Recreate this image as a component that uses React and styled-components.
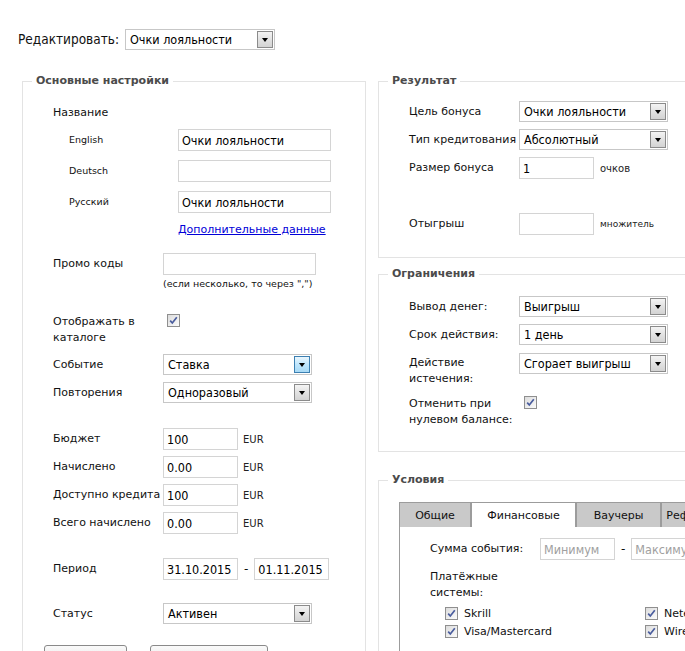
import React from 'react';
import styled, { createGlobalStyle } from 'styled-components';

const GlobalStyle = createGlobalStyle`
  html, body {
    margin: 0;
    overflow: hidden;
    background: #fff;
  }
  body {
    font-family: "DejaVu Sans", Verdana, sans-serif;
    color: #111;
  }
`;

const Page = styled.div`
  width: 720px;
  padding: 29px 0 0 18px;
`;

const TopBar = styled.div`
  display: flex;
  align-items: center;
  gap: 6px;
  height: 21px;
  font: 13.5px/21px "DejaVu Sans Condensed", Tahoma, sans-serif;
`;

const Columns = styled.div`
  display: flex;
  align-items: flex-start;
  gap: 12px;
  margin: 24px 0 0 4px;
`;

const RightCol = styled.div`
  display: flex;
  flex-direction: column;
  width: 330px;
`;

const Box = styled.fieldset`
  margin: ${(p) => p.$mt || 0}px 0 0;
  padding: 0;
  border: 1px solid #e3e3e3;
  width: ${(p) => p.$w}px;
  min-width: 0;
  box-sizing: border-box;
`;

const Legend = styled.legend`
  margin-left: 9px;
  padding: 0 4px;
  font: bold 11px/14px "DejaVu Sans", Verdana, sans-serif;
  color: #4b4b4b;
`;

const Body = styled.div`
  padding: 0 0 ${(p) => p.$pb || 0}px ${(p) => (p.$pl == null ? 30 : p.$pl)}px;
`;

const Row = styled.div`
  display: flex;
  align-items: ${(p) => (p.$top ? 'flex-start' : 'center')};
  margin-top: ${(p) => p.$mt || 0}px;
  padding-left: ${(p) => p.$indent || 0}px;
`;

const Label = styled.div`
  flex: none;
  width: ${(p) => p.$w || 110}px;
  font-size: ${(p) => p.$size || 11}px;
  line-height: 16px;
  white-space: nowrap;
  padding-top: ${(p) => p.$pt || 0}px;
`;

const Title = styled.div`
  font-size: 11px;
  line-height: 16px;
`;

const TextInput = styled.input`
  box-sizing: border-box;
  width: ${(p) => p.$w || 75}px;
  height: 22px;
  margin: 0;
  padding: 0 3px;
  border: 1px solid #d4d4d4;
  font: 12.5px "DejaVu Sans Condensed", Tahoma, sans-serif;
  color: #000;
  outline: none;

  &::placeholder {
    color: #a0a0a0;
  }
`;

const Unit = styled.span`
  margin-left: ${(p) => p.$gap || 5}px;
  font-size: ${(p) => p.$size || 10}px;
  color: #222;
`;

const Dash = styled.span`
  margin: 0 6px;
  font-size: 12px;
`;

const SelectBox = styled.div`
  box-sizing: border-box;
  display: flex;
  align-items: center;
  width: ${(p) => p.$w || 150}px;
  height: 21px;
  border: 1px solid #c7c7c7;
  background: #fff;
  padding: 1px;
  font: 12.5px "DejaVu Sans Condensed", Tahoma, sans-serif;
  color: #000;
`;

const SelectText = styled.span`
  flex: 1;
  padding-left: 3px;
  white-space: nowrap;
  overflow: hidden;
`;

const ArrowBtn = styled.span`
  box-sizing: border-box;
  flex: none;
  display: flex;
  align-items: center;
  justify-content: center;
  width: 16px;
  height: 17px;
  border: 1px solid ${(p) => (p.$hover ? '#3c7fb1' : '#8b8b8b')};
  background: ${(p) =>
    p.$hover
      ? 'linear-gradient(#eaf6fd, #bee6fd 50%, #a7d9f5)'
      : 'linear-gradient(#f4f4f4, #e2e2e2 50%, #d3d3d3)'};

  &::after {
    content: '';
    border-left: 3.5px solid transparent;
    border-right: 3.5px solid transparent;
    border-top: 4px solid #000;
  }
`;

const Select = ({ value, w, hover }) => (
  <SelectBox $w={w}>
    <SelectText>{value}</SelectText>
    <ArrowBtn $hover={hover} />
  </SelectBox>
);

const CheckBox = styled.span`
  box-sizing: border-box;
  flex: none;
  display: inline-flex;
  width: 13px;
  height: 13px;
  margin-left: ${(p) => p.$ml || 0}px;
  border: 1px solid #8f8f8f;
  background: linear-gradient(135deg, #dcdcdc, #fbfbfb);
`;

const Check = ({ ml }) => (
  <CheckBox $ml={ml}>
    <svg width="11" height="11" viewBox="0 0 11 11">
      <path d="M2.2 5.6 L4.3 8 L8.8 2.2" fill="none" stroke="#4a5d9e" strokeWidth="1.7" />
    </svg>
  </CheckBox>
);

const Hint = styled.div`
  font-size: 9.5px;
  line-height: 13px;
  padding-left: 110px;
  margin-top: 2px;
  white-space: nowrap;
`;

const MoreLink = styled.a`
  font-size: 11px;
  line-height: 16px;
  color: #0000d8;
  text-decoration: underline;
  cursor: pointer;
`;

const ButtonRow = styled.div`
  display: flex;
  gap: 23px;
  margin: 21px 0 0 -9px;
  padding-bottom: 20px;
`;

const Button = styled.button`
  width: ${(p) => p.$w}px;
  height: 24px;
  border: 1px solid #8a8a8a;
  border-radius: 3px;
  background: linear-gradient(#fafafa, #e3e3e3);
`;

const TabWidget = styled.div`
  margin: 15px 0 0 20px;
  width: 400px;
  border: 1px solid #9c9c9c;
  border-bottom: none;
`;

const TabBar = styled.div`
  display: flex;
`;

const Tab = styled.div`
  box-sizing: border-box;
  flex: none;
  width: ${(p) => p.$w}px;
  height: 24px;
  display: flex;
  align-items: center;
  justify-content: center;
  font-size: 11px;
  background: ${(p) => (p.$active ? '#fff' : '#c9c9c9')};
  border-right: 2px solid #9c9c9c;
  white-space: nowrap;
  overflow: hidden;
`;

const Panel = styled.div`
  padding: 0 0 30px 30px;
`;

const PayGrid = styled.div`
  display: grid;
  grid-template-columns: 200px 200px;
  margin: 6px 0 0 15px;
  row-gap: 5px;
`;

const PayItem = styled.div`
  display: flex;
  align-items: center;
  gap: 6px;
  font-size: 11px;
  line-height: 13px;
  white-space: nowrap;
`;

export default function App() {
  return (
    <Page>
      <GlobalStyle />
      <TopBar>
        <span>Редактировать:</span>
        <Select value="Очки лояльности" w={150} />
      </TopBar>

      <Columns>
        <Box $w={344}>
          <Legend>Основные настройки</Legend>
          <Body>
            <Row $mt={17}>
              <Title>Название</Title>
            </Row>
            <Row $mt={8} $indent={16}>
              <Label $w={109} $size={9.5}>English</Label>
              <TextInput $w={153} defaultValue="Очки лояльности" />
            </Row>
            <Row $mt={9} $indent={16}>
              <Label $w={109} $size={9.5}>Deutsch</Label>
              <TextInput $w={153} defaultValue="" />
            </Row>
            <Row $mt={9} $indent={16}>
              <Label $w={109} $size={9.5}>Русский</Label>
              <TextInput $w={153} defaultValue="Очки лояльности" />
            </Row>
            <Row $mt={9} $indent={125}>
              <MoreLink>Дополнительные данные</MoreLink>
            </Row>
            <Row $mt={15}>
              <Label>Промо коды</Label>
              <TextInput $w={153} defaultValue="" />
            </Row>
            <Hint>(если несколько, то через ",")</Hint>
            <Row $mt={24} $top>
              <Label>Отображать в<br />каталоге</Label>
              <Check ml={4} />
            </Row>
            <Row $mt={8}>
              <Label>Событие</Label>
              <Select value="Ставка" w={149} hover />
            </Row>
            <Row $mt={7}>
              <Label>Повторения</Label>
              <Select value="Одноразовый" w={149} />
            </Row>
            <Row $mt={25}>
              <Label>Бюджет</Label>
              <TextInput defaultValue="100" />
              <Unit>EUR</Unit>
            </Row>
            <Row $mt={6}>
              <Label>Начислено</Label>
              <TextInput defaultValue="0.00" />
              <Unit>EUR</Unit>
            </Row>
            <Row $mt={6}>
              <Label>Доступно кредита</Label>
              <TextInput defaultValue="100" />
              <Unit>EUR</Unit>
            </Row>
            <Row $mt={6}>
              <Label>Всего начислено</Label>
              <TextInput defaultValue="0.00" />
              <Unit>EUR</Unit>
            </Row>
            <Row $mt={24}>
              <Label>Период</Label>
              <TextInput defaultValue="31.10.2015" />
              <Dash>-</Dash>
              <TextInput defaultValue="01.11.2015" />
            </Row>
            <Row $mt={23}>
              <Label>Статус</Label>
              <Select value="Активен" w={149} />
            </Row>
            <ButtonRow>
              <Button $w={83} aria-label="Сохранить" />
              <Button $w={118} aria-label="Отмена" />
            </ButtonRow>
          </Body>
        </Box>

        <RightCol>
          <Box $w={330}>
            <Legend>Результат</Legend>
            <Body $pb={22}>
              <Row $mt={13}>
                <Label>Цель бонуса</Label>
                <Select value="Очки лояльности" w={149} />
              </Row>
              <Row $mt={7}>
                <Label>Тип кредитования</Label>
                <Select value="Абсолютный" w={149} />
              </Row>
              <Row $mt={7}>
                <Label>Размер бонуса</Label>
                <TextInput defaultValue="1" />
                <Unit $gap={6}>очков</Unit>
              </Row>
              <Row $mt={34}>
                <Label>Отыгрыш</Label>
                <TextInput defaultValue="" />
                <Unit $gap={6} $size={9}>множитель</Unit>
              </Row>
            </Body>
          </Box>

          <Box $w={330} $mt={9}>
            <Legend>Ограничения</Legend>
            <Body $pb={23}>
              <Row $mt={15}>
                <Label>Вывод денег:</Label>
                <Select value="Выигрыш" w={149} />
              </Row>
              <Row $mt={7}>
                <Label>Срок действия:</Label>
                <Select value="1 день" w={149} />
              </Row>
              <Row $mt={8} $top>
                <Label $pt={2}>Действие<br />истечения:</Label>
                <Select value="Сгорает выигрыш" w={149} />
              </Row>
              <Row $mt={9} $top>
                <Label>Отменить при<br />нулевом балансе:</Label>
                <Check ml={5} />
              </Row>
            </Body>
          </Box>

          <Box $w={330} $mt={21}>
            <Legend>Условия</Legend>
            <Body $pl={0}>
              <TabWidget>
                <TabBar>
                  <Tab $w={72}>Общие</Tab>
                  <Tab $w={105} $active>Финансовые</Tab>
                  <Tab $w={85}>Ваучеры</Tab>
                  <Tab $w={90}>Реферальные</Tab>
                </TabBar>
                <Panel>
                  <Row $mt={11}>
                    <Label>Сумма события:</Label>
                    <TextInput placeholder="Минимум" />
                    <Dash>-</Dash>
                    <TextInput placeholder="Максимум" />
                  </Row>
                  <Row $mt={9}>
                    <Title>Платёжные<br />системы:</Title>
                  </Row>
                  <PayGrid>
                    <PayItem><Check />Skrill</PayItem>
                    <PayItem><Check />Neteller</PayItem>
                    <PayItem><Check />Visa/Mastercard</PayItem>
                    <PayItem><Check />Wire transfer</PayItem>
                  </PayGrid>
                </Panel>
              </TabWidget>
            </Body>
          </Box>
        </RightCol>
      </Columns>
    </Page>
  );
}
